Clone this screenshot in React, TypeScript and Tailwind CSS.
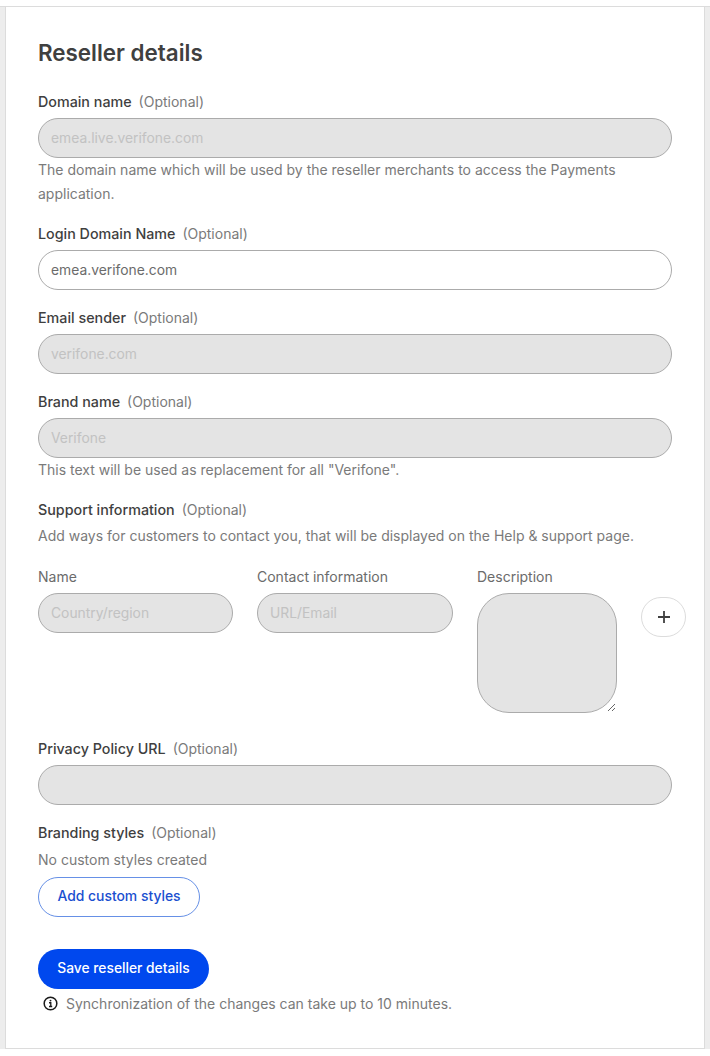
const inputClass =
  "block h-10 w-full rounded-[20px] border border-[#ababab] px-3 text-[13.85px] outline-none"
const disabledClass = "bg-[#e4e4e4] placeholder:text-[#c2c2c2]"

function Label({ name }: { name: string }) {
  return (
    <div className="mb-[5px] h-6 text-sm leading-[25px] text-[#7a7a7a]">
      <span className="text-[14.3px] font-medium text-[#3f3f3f]">{name}</span>
      <span className="ml-[7px]">(Optional)</span>
    </div>
  )
}

function InfoIcon() {
  return (
    <svg width="15" height="15" viewBox="0 0 16 16" fill="none" className="-mt-px shrink-0 text-[#1a1a1a]">
      <circle cx="8" cy="8" r="6.75" stroke="currentColor" strokeWidth="1.6" />
      <circle cx="8" cy="4.9" r="1" fill="currentColor" />
      <path d="M6.4 7.2H8.3V11M6.4 11.2H9.8" stroke="currentColor" strokeWidth="1.4" />
    </svg>
  )
}

export default function App() {
  return (
    <div className="min-h-[1056px] bg-white pt-1.5 font-['Inter',sans-serif]">
      <div className="h-[1043px] border-t border-[#dcdcdc] bg-[#ededed] px-[5px]">
        <div className="h-[1042px] border-x border-b border-[#dcdcdc] bg-white pl-8 pr-8 pt-[30px]">
          <h1 className="mb-5 text-[22.4px] leading-8 font-semibold text-[#404040]">Reseller details</h1>

          <div className="w-[634px]">
            <Label name="Domain name" />
            <input disabled placeholder="emea.live.verifone.com" className={`${inputClass} ${disabledClass}`} />
            <p className="mb-[15px] text-sm leading-6 text-[#7a7a7a]">
              The domain name which will be used by the reseller merchants to access the Payments application.
            </p>

            <Label name="Login Domain Name" />
            <input defaultValue="emea.verifone.com" className={`${inputClass} mb-[15px] bg-white text-[#6b6b6b]`} />

            <Label name="Email sender" />
            <input disabled placeholder="verifone.com" className={`${inputClass} ${disabledClass} mb-[15px]`} />

            <Label name="Brand name" />
            <input disabled placeholder="Verifone" className={`${inputClass} ${disabledClass}`} />
            <p className="mb-[15px] text-sm leading-6 text-[#7a7a7a]">
              This text will be used as replacement for all "Verifone".
            </p>

            <div className="h-6 text-sm leading-[25px] text-[#7a7a7a]">
              <span className="text-[14.3px] font-medium text-[#3f3f3f]">Support information</span>
              <span className="ml-[7px]">(Optional)</span>
            </div>
            <p className="mt-[3px] mb-4 text-sm leading-6 text-[#7a7a7a]">
              Add ways for customers to contact you, that will be displayed on the Help &amp; support page.
            </p>

            <div className="flex w-[648px] items-start gap-6">
              <div className="w-[195px]">
                <div className="mb-[5px] h-6 text-sm leading-[25px] text-[#6b6b6b]">Name</div>
                <input disabled placeholder="Country/region" className={`${inputClass} ${disabledClass}`} />
              </div>
              <div className="w-[196px]">
                <div className="mb-[5px] h-6 text-sm leading-[25px] text-[#6b6b6b]">Contact information</div>
                <input disabled placeholder="URL/Email" className={`${inputClass} ${disabledClass}`} />
              </div>
              <div className="w-[140px]">
                <div className="mb-[5px] h-6 text-sm leading-[25px] text-[#6b6b6b]">Description</div>
                <textarea
                  disabled
                  className="block h-[120px] w-[140px] rounded-[32px] border border-[#ababab] bg-[#e4e4e4] outline-none"
                />
              </div>
              <button className="mt-[33px] flex h-10 w-[45px] items-center justify-center rounded-[20px] border border-[#dcdcdc] bg-white text-[#404040]">
                <svg width="14" height="14" viewBox="0 0 14 14" fill="none">
                  <path d="M7 1V13M1 7H13" stroke="currentColor" strokeWidth="1.8" />
                </svg>
              </button>
            </div>

            <div className="mt-[23px]">
              <Label name="Privacy Policy URL" />
              <input disabled className={`${inputClass} ${disabledClass}`} />
            </div>

            <div className="mt-[15px] h-6 text-sm leading-[25px] text-[#7a7a7a]">
              <span className="text-[14.3px] font-medium text-[#3f3f3f]">Branding styles</span>
              <span className="ml-[7px]">(Optional)</span>
            </div>
            <p className="mt-1 mb-[5px] text-sm leading-6 text-[#7a7a7a]">No custom styles created</p>
            <button className="block h-10 w-[162px] rounded-[20px] border border-[#6690e6] bg-white pb-[1px] text-[13.9px] font-medium text-[#1a4fd0]">
              Add custom styles
            </button>

            <button className="mt-8 block h-10 w-[171px] rounded-[20px] bg-[#0048ee] pb-[1px] text-[13.8px] font-medium text-white">
              Save reseller details
            </button>
            <div className="mt-[3px] flex h-6 items-center gap-[8px] pl-[5px] text-sm leading-[26px] text-[#7a7a7a]">
              <InfoIcon />
              <span>Synchronization of the changes can take up to 10 minutes.</span>
            </div>
          </div>
        </div>
      </div>
    </div>
  )
}
